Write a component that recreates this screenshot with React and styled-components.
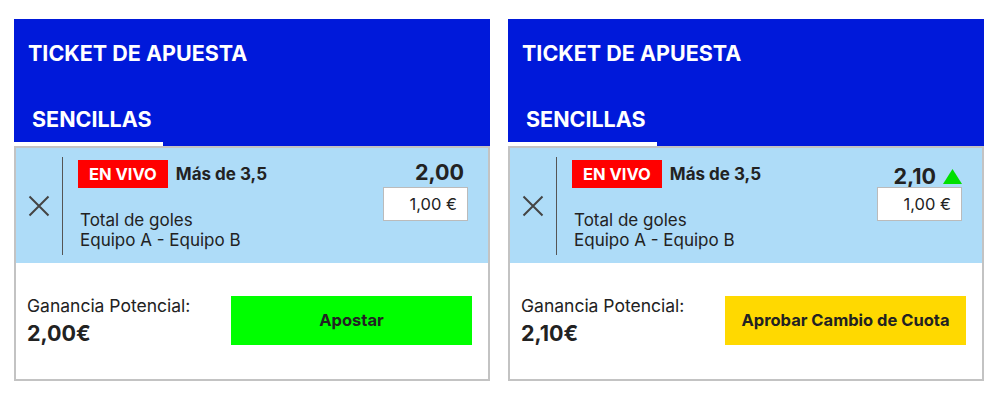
import styled, { createGlobalStyle } from 'styled-components';

const GlobalStyle = createGlobalStyle`
  body {
    margin: 0;
    background: #ffffff;
    font-family: Inter, "Noto Sans", sans-serif;
    color: #222222;
  }
`;

const Page = styled.div`
  display: flex;
  gap: 18px;
  padding: 19px 16px 0 14px;
`;

const Ticket = styled.section`
  width: 476px;
  display: flex;
  flex-direction: column;
`;

const Header = styled.header`
  background: #0019da;
  color: #ffffff;
  padding-top: 21px;
`;

const Title = styled.h2`
  margin: 0 0 0 14px;
  font-size: 21.5px;
  line-height: 26px;
  font-weight: 700;
`;

const Tabs = styled.div`
  display: flex;
  margin-top: 40px;
`;

const Tab = styled.div`
  width: 131px;
  padding-left: 18px;
  font-size: 21.5px;
  line-height: 26px;
  font-weight: 700;
  padding-bottom: 10px;
  border-bottom: 4px solid #ffffff;
`;

const Body = styled.div`
  border: 2px solid #c3c3c3;
`;

const Selection = styled.div`
  display: flex;
  background: #aedcf8;
  padding: 9px 0 8px;
  min-height: 115px;
  box-sizing: border-box;
`;

const Close = styled.button`
  width: 46px;
  border: 0;
  background: none;
  padding: 0;
  display: flex;
  align-items: center;
  justify-content: center;
  color: #444444;
`;

const Info = styled.div`
  flex: 1;
  border-left: 1.5px solid #555555;
  padding: 3px 0 0 15px;
`;

const TopLine = styled.div`
  display: flex;
  align-items: center;
  gap: 8px;
`;

const LiveBadge = styled.span`
  height: 28px;
  padding: 0 11px;
  display: flex;
  align-items: center;
  background: #ff0000;
  color: #ffffff;
  font-size: 16.5px;
  font-weight: 700;
`;

const Market = styled.span`
  font-size: 17px;
  font-weight: 700;
`;

const Description = styled.div`
  margin-top: 22px;
  margin-left: 2px;
  font-size: 17px;
  line-height: 20px;
`;

const Stake = styled.div`
  display: flex;
  flex-direction: column;
  align-items: flex-end;
  margin: 1px 20px 0 0;
`;

const Odds = styled.div`
  display: flex;
  align-items: center;
  gap: 7px;
  height: 28px;
  margin-right: ${(p) => (p.$changed ? '0' : '4px')};
  padding-top: ${(p) => (p.$changed ? '4px' : '0')};
  margin-bottom: ${(p) => (p.$changed ? '-4px' : '0')};
  font-size: 21.5px;
  font-weight: 700;
`;

const StakeInput = styled.div`
  width: 85px;
  height: 34px;
  box-sizing: border-box;
  margin-top: 1px;
  background: #ffffff;
  border: 1px solid #bbbbbb;
  display: flex;
  align-items: center;
  justify-content: flex-end;
  padding-right: 10px;
  font-size: 16.5px;
`;

const Summary = styled.div`
  display: flex;
  align-items: center;
  justify-content: space-between;
  height: 116px;
  padding: 0 16px 0 11px;
  box-sizing: border-box;
`;

const WinLabel = styled.div`
  font-size: 17.5px;
  line-height: 22px;
`;

const WinAmount = styled.div`
  margin-top: 3px;
  font-size: 21.5px;
  line-height: 27px;
  font-weight: 700;
`;

const ActionButton = styled.button`
  width: 241px;
  height: 49px;
  margin-top: -2px;
  border: 0;
  background: ${(p) => (p.$variant === 'approve' ? '#ffd900' : '#00ff00')};
  color: #222222;
  font-family: Inter, "Noto Sans", sans-serif;
  font-size: 16.5px;
  font-weight: 700;
`;

function CloseIcon() {
  return (
    <svg width="22" height="22" viewBox="0 0 22 22" fill="none" stroke="currentColor" strokeWidth="2">
      <path d="M1.5 1.5 L20.5 20.5 M20.5 1.5 L1.5 20.5" />
    </svg>
  );
}

function UpArrow() {
  return (
    <svg width="19" height="15" viewBox="0 0 19 15">
      <polygon points="9.5,0 19,15 0,15" fill="#00e000" />
    </svg>
  );
}

function BetTicket({ odds, changed, potential, action, variant }) {
  return (
    <Ticket>
      <Header>
        <Title>TICKET DE APUESTA</Title>
        <Tabs>
          <Tab>SENCILLAS</Tab>
        </Tabs>
      </Header>
      <Body>
        <Selection>
          <Close aria-label="Eliminar">
            <CloseIcon />
          </Close>
          <Info>
            <TopLine>
              <LiveBadge>EN VIVO</LiveBadge>
              <Market>Más de 3,5</Market>
            </TopLine>
            <Description>
              Total de goles
              <br />
              Equipo A - Equipo B
            </Description>
          </Info>
          <Stake>
            <Odds $changed={changed}>
              {odds}
              {changed && <UpArrow />}
            </Odds>
            <StakeInput>1,00 €</StakeInput>
          </Stake>
        </Selection>
        <Summary>
          <div>
            <WinLabel>Ganancia Potencial:</WinLabel>
            <WinAmount>{potential}</WinAmount>
          </div>
          <ActionButton $variant={variant}>{action}</ActionButton>
        </Summary>
      </Body>
    </Ticket>
  );
}

export default function App() {
  return (
    <>
      <GlobalStyle />
      <Page>
        <BetTicket odds="2,00" potential="2,00€" action="Apostar" variant="bet" />
        <BetTicket
          odds="2,10"
          changed
          potential="2,10€"
          action="Aprobar Cambio de Cuota"
          variant="approve"
        />
      </Page>
    </>
  );
}
